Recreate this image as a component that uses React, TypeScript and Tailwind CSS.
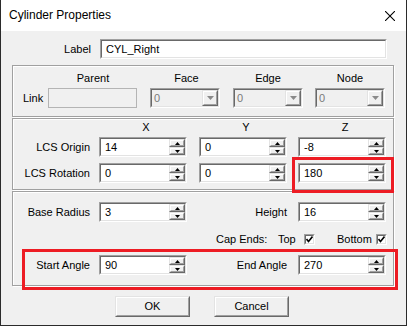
import React from 'react';

// Classic Win32 dialog look, sunken/raised edges done with two nested borders
const sunkenOuter = 'border border-t-[#a0a0a0] border-l-[#a0a0a0] border-b-white border-r-white';
const sunkenInner = 'border border-t-[#696969] border-l-[#696969] border-b-[#e3e3e3] border-r-[#e3e3e3]';
const raisedOuter = 'border border-t-[#e3e3e3] border-l-[#e3e3e3] border-b-[#696969] border-r-[#696969]';
const raisedInner = 'border border-t-white border-l-white border-b-[#a0a0a0] border-r-[#a0a0a0]';

const Arrow: React.FC<{ up?: boolean; color?: string; w?: number; h?: number }> = ({
  up,
  color = '#000',
  w = 5,
  h = 3,
}) => (
  <svg width={w} height={h} viewBox={`0 0 ${w} ${h}`}>
    <polygon points={up ? `0,${h} ${w},${h} ${w / 2},0` : `0,0 ${w},0 ${w / 2},${h}`} fill={color} />
  </svg>
);

const TextBox: React.FC<{ value: string; className?: string }> = ({ value, className = '' }) => (
  <div className={`${sunkenOuter} h-[20px] ${className}`}>
    <div className={`${sunkenInner} flex h-full items-center bg-white pl-[4px] text-black`}>{value}</div>
  </div>
);

const SpinHalf: React.FC<{ up?: boolean }> = ({ up }) => (
  <div className={`${raisedOuter} flex-1`}>
    <div className={`${raisedInner} flex h-full items-center justify-center bg-[#f0f0f0]`}>
      <Arrow up={up} />
    </div>
  </div>
);

const SpinBox: React.FC<{ value: string }> = ({ value }) => (
  <div className={`${sunkenOuter} h-[20px] w-[88px] shrink-0`}>
    <div className={`${sunkenInner} flex h-full bg-white`}>
      <div className="flex flex-1 items-center pl-[4px] text-black">{value}</div>
      <div className="flex w-[16px] flex-col">
        <SpinHalf up />
        <SpinHalf />
      </div>
    </div>
  </div>
);

const Combo: React.FC = () => (
  <div className={`${sunkenOuter} h-[20px] w-[70px]`}>
    <div className={`${sunkenInner} flex h-full bg-[#f0f0f0]`}>
      <div className="flex flex-1 items-center pl-[2px] text-[#7a7a7a]">0</div>
      <div className={`${raisedOuter} w-[16px]`}>
        <div className={`${raisedInner} flex h-full items-center justify-center bg-[#f0f0f0]`}>
          <Arrow color="#8a8a8a" w={7} h={4} />
        </div>
      </div>
    </div>
  </div>
);

const CheckBox: React.FC = () => (
  <div className={`${sunkenOuter} h-[11px] w-[11px]`}>
    <div className={`${sunkenInner} flex h-full items-center justify-center bg-white`}>
      <svg width="7" height="7" viewBox="0 0 7 7">
        <path d="M0.5 3 L2.5 5.5 L6.5 0.5" stroke="#000" strokeWidth="1.6" fill="none" />
      </svg>
    </div>
  </div>
);

const Button: React.FC<{ label: string; className?: string }> = ({ label, className = '' }) => (
  <div className={`${raisedOuter} h-[21px] w-[75px] ${className}`}>
    <div className={`${raisedInner} flex h-full items-center justify-center bg-[#f0f0f0] text-black`}>
      {label}
    </div>
  </div>
);

const groupBox = 'ml-[11px] w-[382px] border border-[#a0a0a0] shadow-[inset_1px_1px_0_#fff,1px_1px_0_#fff]';

const App: React.FC = () => {
  return (
    <div className="flex h-[326px] w-[407px] flex-col border-x border-b border-[#2b2b2b] bg-[#f0f0f0] font-['Liberation_Sans',Arial,sans-serif] text-[11px] leading-[13px] text-black">
      {/* Title bar */}
      <div className="flex h-[31px] shrink-0 items-center justify-between bg-white pl-[8px] pr-[11px]">
        <span className="text-[12px]">Cylinder Properties</span>
        <svg width="10" height="10" viewBox="0 0 10 10">
          <path d="M0 0 L10 10 M10 0 L0 10" stroke="#000" strokeWidth="1.1" />
        </svg>
      </div>

      <div className="relative flex-1">
        {/* Label */}
        <div className="mt-[8px] flex items-center">
          <div className="w-[90px] text-right">Label</div>
          <TextBox value="CYL_Right" className="ml-[9px] w-[287px]" />
        </div>

        {/* Link group */}
        <div className={`${groupBox} mt-[6px] h-[52px] pt-[6px]`}>
          <div className="flex items-end">
            <div className="flex h-[20px] w-[35px] items-center pl-[10px]">Link</div>
            <div className="flex w-[89px] flex-col items-center">
              <span className="pl-[1px]">Parent</span>
              <div className="mt-[3px] h-[20px] w-full border border-[#b4b4b4] bg-[#f0f0f0]" />
            </div>
            <div className="ml-[13px] flex flex-col items-center">
              <span className="pl-[3px]">Face</span>
              <div className="mt-[3px]">
                <Combo />
              </div>
            </div>
            <div className="ml-[13px] flex flex-col items-center">
              <span>Edge</span>
              <div className="mt-[3px]">
                <Combo />
              </div>
            </div>
            <div className="ml-[12px] flex flex-col items-center">
              <span>Node</span>
              <div className="mt-[3px]">
                <Combo />
              </div>
            </div>
          </div>
        </div>

        {/* LCS group */}
        <div className={`${groupBox} mt-[1px] h-[72px] pt-[2px]`}>
          <div className="flex">
            <div className="ml-[86px] w-[88px] pl-[6px] text-center">X</div>
            <div className="ml-[12px] w-[88px] pl-[6px] text-center">Y</div>
            <div className="ml-[11px] w-[88px] pl-[6px] text-center">Z</div>
          </div>
          <div className="mt-[3px] flex items-center">
            <div className="w-[77px] text-right">LCS Origin</div>
            <div className="ml-[9px]"><SpinBox value="14" /></div>
            <div className="ml-[12px]"><SpinBox value="0" /></div>
            <div className="ml-[11px]"><SpinBox value="-8" /></div>
          </div>
          <div className="mt-[6px] flex items-center">
            <div className="w-[77px] text-right">LCS Rotation</div>
            <div className="ml-[9px]"><SpinBox value="0" /></div>
            <div className="ml-[12px]"><SpinBox value="0" /></div>
            <div className="ml-[11px]"><SpinBox value="180" /></div>
          </div>
        </div>

        {/* Shape group */}
        <div className={`${groupBox} mt-[1px] h-[95px] pt-[10px]`}>
          <div className="flex items-center">
            <div className="w-[77px] text-right">Base Radius</div>
            <div className="ml-[9px]"><SpinBox value="3" /></div>
            <div className="w-[100px] text-right">Height</div>
            <div className="ml-[11px]"><SpinBox value="16" /></div>
          </div>
          <div className="mt-[11px] flex h-[13px] items-center">
            <div className="ml-[203px] w-[62px]">Cap Ends:</div>
            <div className="w-[26px]">Top</div>
            <CheckBox />
            <div className="ml-[22px] w-[39px]">Bottom</div>
            <CheckBox />
          </div>
          <div className="mt-[9px] flex items-center">
            <div className="w-[77px] text-right">Start Angle</div>
            <div className="ml-[9px]"><SpinBox value="90" /></div>
            <div className="w-[100px] text-right">End Angle</div>
            <div className="ml-[11px]"><SpinBox value="270" /></div>
          </div>
        </div>

        {/* Buttons */}
        <div className="mt-[10px] flex">
          <Button label="OK" className="ml-[114px]" />
          <Button label="Cancel" className="ml-[24px]" />
        </div>

        {/* Red annotation boxes */}
        <div className="absolute left-[291px] top-[126px] h-[36px] w-[102px] border-[3px] border-[#ed1c24]" />
        <div className="absolute left-[21px] top-[218px] h-[41px] w-[376px] border-[3px] border-[#ed1c24]" />
      </div>
    </div>
  );
};

export default App;
